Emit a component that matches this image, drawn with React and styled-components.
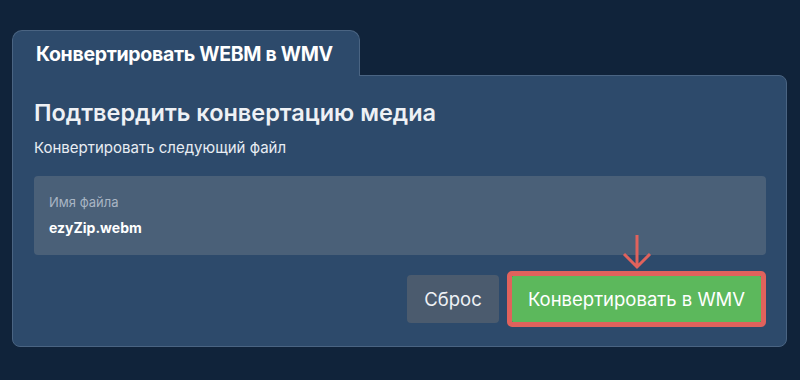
import React from 'react';
import styled, { createGlobalStyle } from 'styled-components';

const GlobalStyle = createGlobalStyle`
  html, body { margin: 0; padding: 0; }
  body {
    background: #10233a;
    font-family: Inter, "Noto Sans", sans-serif;
    color: #f1f4f8;
  }
`;

export default function App() {
  return (
    <>
      <GlobalStyle />
      <Page>
        <Tab>Конвертировать WEBM в WMV</Tab>
        <Panel>
          <Title>Подтвердить конвертацию медиа</Title>
          <Subtitle>Конвертировать следующий файл</Subtitle>
          <FileBox>
            <FileLabel>Имя файла</FileLabel>
            <FileName>ezyZip.webm</FileName>
          </FileBox>
          <Actions>
            <ResetButton>Сброс</ResetButton>
            <Highlight>
              <Arrow width="30" height="36" viewBox="0 0 30 36">
                <path d="M15 1 V33 M2 20 L15 33 L28 20" fill="none" stroke="#e0625c" strokeWidth="3" />
              </Arrow>
              <ConvertButton>Конвертировать в WMV</ConvertButton>
            </Highlight>
          </Actions>
        </Panel>
      </Page>
    </>
  );
}

const Page = styled.div`
  padding: 30px 13px 0 12px;
  display: flex;
  flex-direction: column;
  align-items: flex-start;
`;

const Tab = styled.div`
  position: relative;
  z-index: 1;
  width: 348px;
  height: 46px;
  box-sizing: border-box;
  padding: 0 0 0 23px;
  display: flex;
  align-items: center;
  background: #2d4a6b;
  border: 1px solid #4a6482;
  border-bottom: none;
  border-radius: 10px 10px 0 0;
  margin-bottom: -1px;
  font-size: 19.5px;
  font-weight: 700;
  color: #ffffff;
  letter-spacing: -0.3px;
`;

const Panel = styled.div`
  align-self: stretch;
  box-sizing: border-box;
  height: 272px;
  background: #2d4a6b;
  border: 1px solid #4a6482;
  border-radius: 0 8px 8px 8px;
  padding: 22px 20px 0 21px;
`;

const Title = styled.h1`
  margin: 0;
  font-size: 23.5px;
  font-weight: 600;
  line-height: 30px;
  color: #eef1f5;
`;

const Subtitle = styled.p`
  margin: 10px 0 0;
  font-size: 15px;
  line-height: 20px;
  color: #e8edf3;
`;

const FileBox = styled.div`
  margin-top: 18px;
  height: 79px;
  box-sizing: border-box;
  background: #4a6078;
  border-radius: 4px;
  padding: 17px 15px 0;
`;

const FileLabel = styled.div`
  font-size: 13px;
  line-height: 18px;
  color: #a9b5c4;
`;

const FileName = styled.div`
  margin-top: 7px;
  font-size: 14px;
  font-weight: 700;
  line-height: 20px;
  color: #ffffff;
`;

const Actions = styled.div`
  margin-top: 16px;
  display: flex;
  justify-content: flex-end;
  align-items: center;
  gap: 8px;
`;

const ResetButton = styled.button`
  width: 92px;
  height: 48px;
  border: none;
  border-radius: 4px;
  background: #4b5b6e;
  color: #eef1f5;
  font-family: inherit;
  font-size: 18.5px;
  font-weight: 400;
`;

const Highlight = styled.div`
  position: relative;
  border: 5px solid #e0625c;
  border-radius: 5px;
  display: flex;
`;

const Arrow = styled.svg`
  position: absolute;
  left: 50%;
  top: -42px;
  transform: translateX(-50%);
`;

const ConvertButton = styled.button`
  width: 249px;
  height: 46px;
  border: none;
  border-radius: 1px;
  background: #5cb85c;
  color: #ffffff;
  font-family: inherit;
  font-size: 18.5px;
  font-weight: 400;
`;
